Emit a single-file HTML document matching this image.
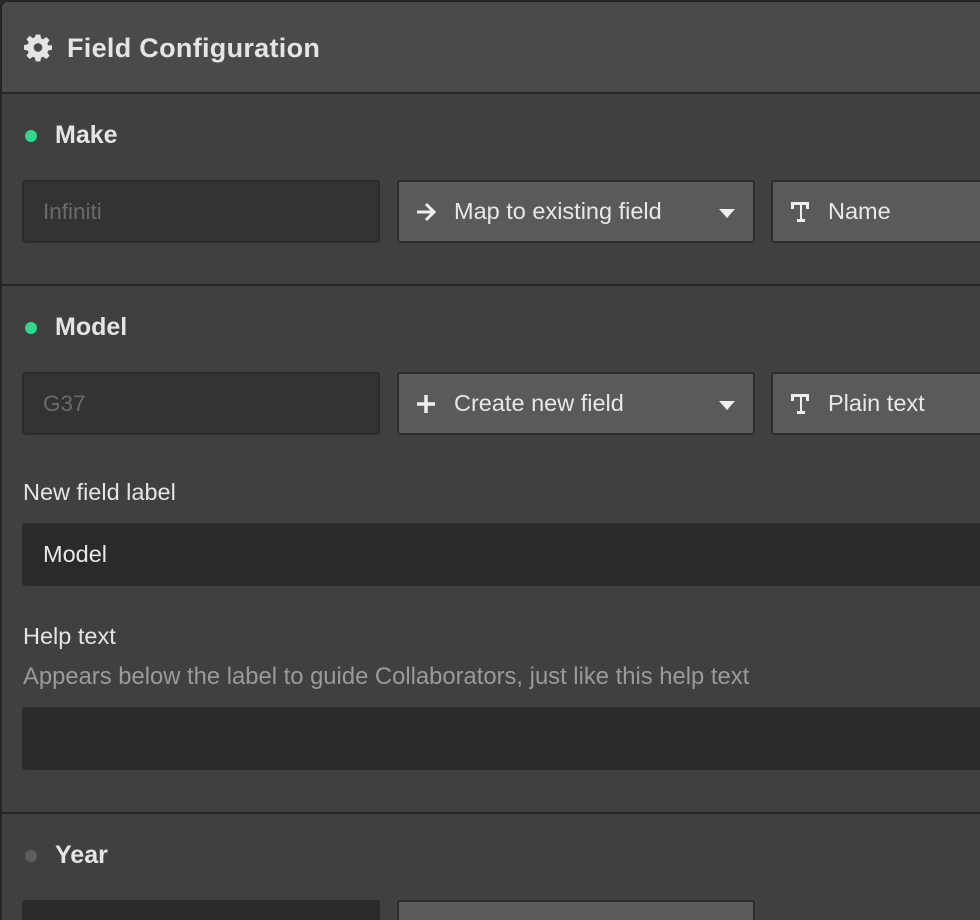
<!DOCTYPE html>
<html><head><style>
*{box-sizing:border-box;margin:0;padding:0}
html,body{width:980px;height:920px;overflow:hidden}
body{background:#2a2a2a;font-family:"Liberation Sans",sans-serif}
.panel{position:absolute;left:0;top:0;width:1000px;height:920px;background:#404040;border:2px solid #262626;border-right:none;border-bottom:none;border-radius:8px 0 0 0;overflow:hidden}
.header{height:92px;background:#4a4a4a;border-bottom:2px solid #262626;position:relative}
.header .t{position:absolute;left:65px;top:31px;font-size:27px;font-weight:bold;color:#e4e4e4;letter-spacing:0.3px}
.sec{position:relative;border-bottom:2px solid #262626}
.title{position:absolute;left:53px;font-size:25px;font-weight:bold;color:#e4e4e4}
.dot{position:absolute;left:23px;width:12px;height:12px;border-radius:50%;background:#2ed88a}
.box{position:absolute;height:63px;border:2px solid #2c2c2c;border-radius:3px;font-size:23.5px;color:#e8e8e8;line-height:59px;white-space:nowrap}
.in{background:#333;color:#6a6a6a;padding-left:19px;font-size:22.5px}
.in2{background:#2a2a2a;color:#e8e8e8;padding-left:19px}
.sel{background:#5a5a5a;padding-left:55px}
.sel svg{position:absolute;left:16px;top:19px}
.caret{position:absolute;right:18px;top:27px;width:0;height:0;border-left:8px solid transparent;border-right:8px solid transparent;border-top:9px solid #eee}
.lbl{position:absolute;left:21px;font-size:23.5px;color:#e4e4e4}
.help{position:absolute;left:21px;font-size:23.8px;color:#9a9a9a}
</style></head><body>
<div class="panel">
<div class="header">
<svg style="position:absolute;left:22px;top:32px" width="28" height="28" viewBox="0 0 24 24"><path fill="#e4e4e4" d="M10 1h4l.6 3.2 1.8.8 2.7-1.9 2.8 2.8-1.9 2.7.8 1.8L24 10v4l-3.2.6-.8 1.8 1.9 2.7-2.8 2.8-2.7-1.9-1.8.8L14 24h-4l-.6-3.2-1.8-.8-2.7 1.9-2.8-2.8 1.9-2.7-.8-1.8L0 14v-4l3.2-.6.8-1.8-1.9-2.7 2.8-2.8 2.7 1.9 1.8-.8zM12 8.3a3.7 3.7 0 100 7.4 3.7 3.7 0 000-7.4z" transform="translate(0,-.5)"/></svg>
<div class="t">Field Configuration</div>
</div>
<div class="sec" style="height:192px">
<div class="dot" style="top:36px"></div><div class="title" style="top:27px">Make</div>
<div class="box in" style="left:20px;top:86px;width:358px">Infiniti</div>
<div class="box sel" style="left:395px;top:86px;width:358px"><svg width="22" height="22" viewBox="0 0 22 22"><path d="M2 11h17M11 3l8 8-8 8" stroke="#eee" stroke-width="3" fill="none"/></svg>Map to existing field<div class="caret"></div></div>
<div class="box sel" style="left:769px;top:86px;width:300px"><svg width="22" height="22" viewBox="0 0 22 22"><path fill="#eee" d="M2 1h18v7h-3V4h-4v14h3v3H8v-3h3V4H5v4H2z"/></svg>Name</div>
</div>
<div class="sec" style="height:528px">
<div class="dot" style="top:36px"></div><div class="title" style="top:27px">Model</div>
<div class="box in" style="left:20px;top:86px;width:358px">G37</div>
<div class="box sel" style="left:395px;top:86px;width:358px"><svg width="22" height="22" viewBox="0 0 22 22"><path d="M11 2v18M2 11h18" stroke="#eee" stroke-width="3.5"/></svg>Create new field<div class="caret"></div></div>
<div class="box sel" style="left:769px;top:86px;width:300px"><svg width="22" height="22" viewBox="0 0 22 22"><path fill="#eee" d="M2 1h18v7h-3V4h-4v14h3v3H8v-3h3V4H5v4H2z"/></svg>Plain text</div>
<div class="lbl" style="top:193px">New field label</div>
<div class="box in2" style="left:20px;top:237px;width:1000px">Model</div>
<div class="lbl" style="top:337px">Help text</div>
<div class="help" style="top:377px">Appears below the label to guide Collaborators, just like this help text</div>
<div class="box in2" style="left:20px;top:421px;width:1000px"></div>
</div>
<div class="sec" style="height:200px;border:none">
<div class="dot" style="top:36px;background:#5e5e5e"></div><div class="title" style="top:27px">Year</div>
<div class="box in2" style="left:20px;top:86px;width:358px"></div>
<div class="box sel" style="left:395px;top:86px;width:358px"></div>
</div>
</div>
</body></html>
